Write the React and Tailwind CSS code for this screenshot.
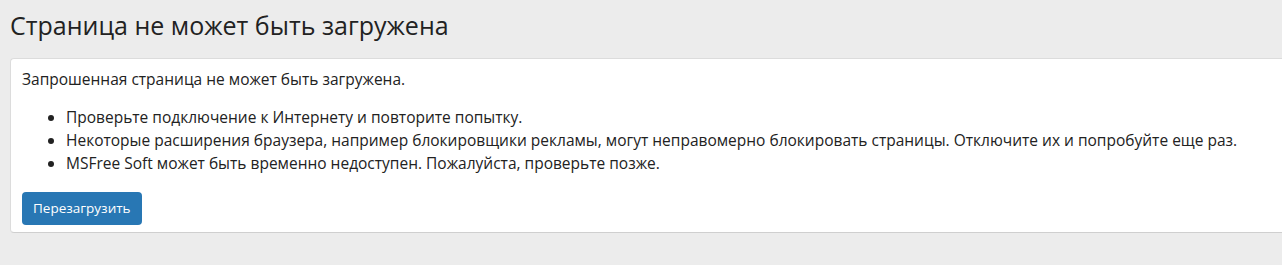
export default function App() {
  return (
    <div className="min-h-[265px] w-full bg-[#ececec] pl-[10px] pt-[10px] text-[#222]" style={{ fontFamily: '"Open Sans", "Noto Sans", sans-serif' }}>
      <h1 className="text-[25px] leading-[30px] font-normal text-[#222]">Страница не может быть загружена</h1>
      <div className="mt-[18px] rounded-l-[4px] border border-r-0 border-[#dcdcdc] border-b-[#cfcfcf] bg-white pl-[11px] pt-[9px] pb-[6px] text-[15.5px] leading-[23px]">
        <p>Запрошенная страница не может быть загружена.</p>
        <ul className="mt-[15px] list-disc pl-[44px]">
          <li>Проверьте подключение к Интернету и повторите попытку.</li>
          <li>Некоторые расширения браузера, например блокировщики рекламы, могут неправомерно блокировать страницы. Отключите их и попробуйте еще раз.</li>
          <li>MSFree Soft может быть временно недоступен. Пожалуйста, проверьте позже.</li>
        </ul>
        <button className="mt-[17px] mb-[1px] h-[33px] rounded-[4px] bg-[#2877b4] px-[11px] text-[13.5px] text-white">Перезагрузить</button>
      </div>
    </div>
  );
}
